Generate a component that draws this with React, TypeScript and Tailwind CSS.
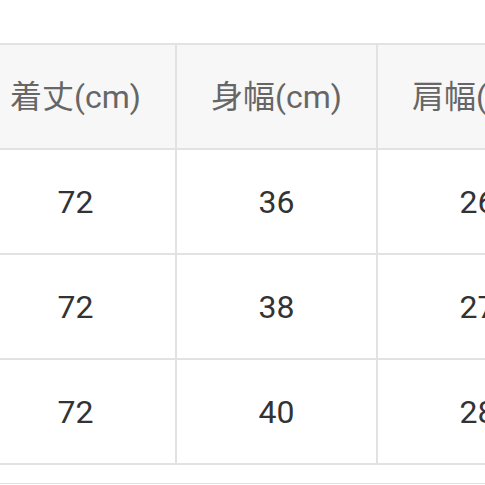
import React from "react";

const headers = ["着丈(cm)", "身幅(cm)", "肩幅(cm)", "袖丈(cm)"];
const rows = [
  ["72", "36", "26", "60"],
  ["72", "38", "27", "61"],
  ["72", "40", "28", "62"],
];

export default function App() {
  return (
    <div
      className="w-[485px] h-[485px] overflow-hidden bg-white"
      style={{ fontFamily: 'Roboto, "Noto Sans CJK JP", sans-serif' }}
    >
      <div className="ml-[-26px] mt-[43px] w-max border-t-2 border-l-2 border-[#e2e2e2]">
        <div className="flex">
          {headers.map((h) => (
            <div
              key={h}
              className="w-[201px] h-[105px] shrink-0 flex items-center justify-center border-r-2 border-b-2 border-[#e2e2e2] bg-[#f7f7f7] text-[32px] text-[#666666]"
            >
              {h}
            </div>
          ))}
        </div>
        {rows.map((r, i) => (
          <div key={i} className="flex">
            {r.map((c, j) => (
              <div
                key={j}
                className="w-[201px] h-[105px] shrink-0 flex items-center justify-center border-r-2 border-b-2 border-[#e2e2e2] bg-white text-[32px] text-[#333333]"
              >
                {c}
              </div>
            ))}
          </div>
        ))}
      </div>
      <div className="mt-[18px] border-t border-[#e0e0e0] h-[10px]" />
    </div>
  );
}
